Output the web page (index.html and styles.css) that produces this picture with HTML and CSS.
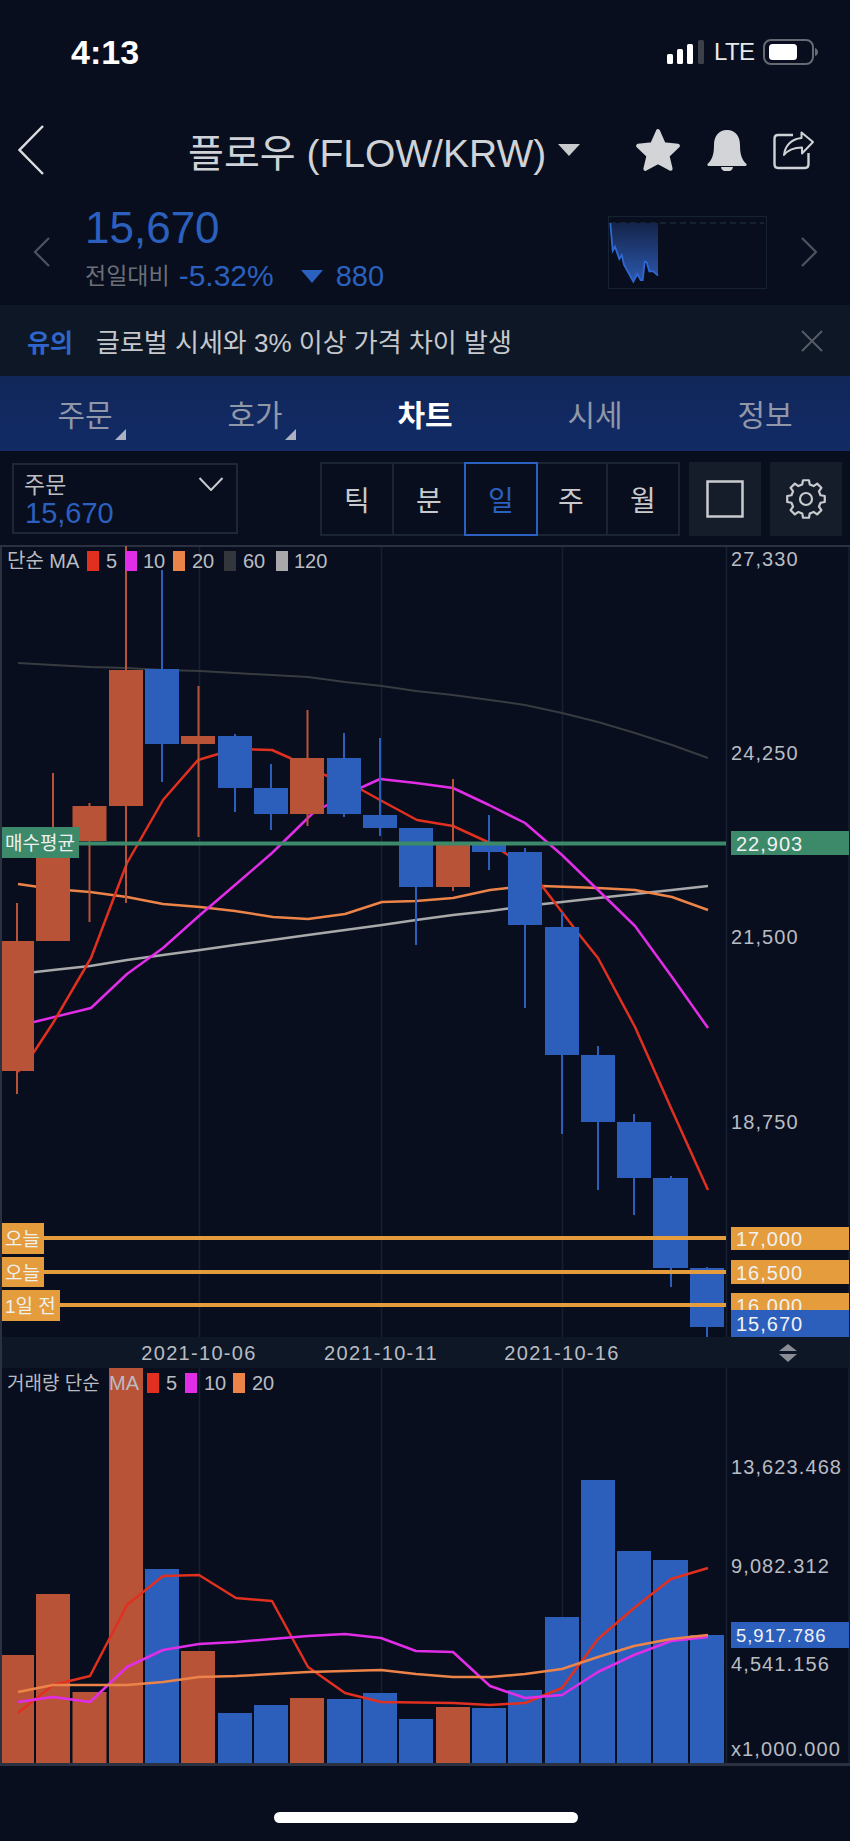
FILE: index.html
```html
<!DOCTYPE html>
<html lang="ko">
<head>
  <meta charset="utf-8">
  <title>플로우 (FLOW/KRW) 차트</title>
  <meta name="viewport" content="width=device-width, initial-scale=1">
  <link rel="stylesheet" href="styles.css">
</head>
<body>
  <div class="page">

    <!-- Status bar -->
    <div class="status">
      <span class="time">4:13</span>
      <div class="status-right">
        <svg class="signal" width="38" height="24" viewBox="0 0 38 24">
          <rect x="0" y="14" width="6" height="10" rx="1.5" fill="#fff"/>
          <rect x="10" y="9" width="6" height="15" rx="1.5" fill="#fff"/>
          <rect x="20" y="4" width="6" height="20" rx="1.5" fill="#fff"/>
          <rect x="31" y="0" width="6" height="24" rx="1.5" fill="#3c4048"/>
        </svg>
        <span class="lte">LTE</span>
        <svg class="battery" width="55" height="26" viewBox="0 0 55 26">
          <rect x="1" y="1" width="49" height="24" rx="7" fill="none" stroke="#666b73" stroke-width="2"/>
          <rect x="6" y="5" width="28" height="16" rx="3.5" fill="#fff"/>
          <path d="M52 9 Q55 10 55 13 Q55 16 52 17 Z" fill="#666b73"/>
        </svg>
      </div>
    </div>

    <!-- Title -->
    <div class="nav">
      <svg class="back" width="26" height="50" viewBox="0 0 26 50">
        <path d="M25 1 L1.5 25 L25 49" fill="none" stroke="#dcdde0" stroke-width="2.5"/>
      </svg>
      <h1 class="title">플로우 (FLOW/KRW)</h1>
      <span class="title-caret"></span>
      <div class="nav-icons">
        <svg class="star" width="48" height="44" viewBox="0 0 46 42">
          <path d="M23 3 L28.5 15.5 L42 17 L32 26.5 L35 39 L23 32.5 L11 39 L14 26.5 L4 17 L17.5 15.5 Z" fill="#d2d4d8" stroke="#d2d4d8" stroke-width="4" stroke-linejoin="round"/>
        </svg>
        <svg width="40" height="41" viewBox="0 0 40 41">
          <path d="M20 0 C11 0 7 7 7 15 C7 25 5 30 .5 34 Q0 36 2 36 H38 Q40 36 39.5 34 C35 30 33 25 33 15 C33 7 29 0 20 0 Z M14 37 A6 4.5 0 0 0 26 37 Z" fill="#d2d4d8"/>
        </svg>
        <svg width="42" height="39" viewBox="0 0 42 39">
          <path d="M20 4 H5 Q1.5 4 1.5 7.5 V33 Q1.5 37 5 37 H32 Q35.5 37 35.5 33 V22" fill="none" stroke="#cfd2d6" stroke-width="2.4"/>
          <path d="M40 11 L28.5 1.5 V7 C18 8 12 15 11 24 C15 19 21 16.5 29 16.5 V22.5 Z" fill="none" stroke="#cfd2d6" stroke-width="2" stroke-linejoin="round"/>
        </svg>
      </div>
    </div>

    <!-- Quote -->
    <div class="quote">
      <svg class="chev" width="18" height="30" viewBox="0 0 18 30">
        <path d="M16 1 L2 15 L16 29" fill="none" stroke="#4d535e" stroke-width="2.2"/>
      </svg>
      <div class="quote-main">
        <div class="price">15,670</div>
        <div class="change">
          <span class="change-label">전일대비</span>
          <span class="change-pct">-5.32%</span>
          <span class="down-caret"></span>
          <span class="change-abs">880</span>
        </div>
      </div>
      <svg class="mini" width="159" height="73" viewBox="608 217 159 73">
        <defs>
          <linearGradient id="miniFill" x1="0" y1="0" x2="0" y2="1">
            <stop offset="0" stop-color="#14244a"/>
            <stop offset="1" stop-color="#2c58ae"/>
          </linearGradient>
        </defs>
        <rect x="608.5" y="217.5" width="158" height="72" fill="none" stroke="#172231"/>
        <path d="M610 224 H764" stroke="#1d2735" stroke-width="1.5" stroke-dasharray="6 4"/>
        <path d="M610.3 224 L612.7 251.7 L615 247.7 L619.3 260 L621.7 256 L624 265.7 L633.3 282.7 L637.3 275 L640.7 281 L642.7 281 L644.7 262.7 L646.7 263.3 L649.3 272.3 L653.3 272.3 L658 276.7 V224 Z" fill="url(#miniFill)"/>
        <path d="M610.3 224 L612.7 251.7 L615 247.7 L619.3 260 L621.7 256 L624 265.7 L633.3 282.7 L637.3 275 L640.7 281 L642.7 281 L644.7 262.7 L646.7 263.3 L649.3 272.3 L653.3 272.3 L658 276.7" fill="none" stroke="#2f68d4" stroke-width="1.8"/>
      </svg>
      <svg class="chev chev-right" width="18" height="30" viewBox="0 0 18 30">
        <path d="M2 1 L16 15 L2 29" fill="none" stroke="#4d535e" stroke-width="2.2"/>
      </svg>
    </div>

    <!-- Notice -->
    <div class="notice">
      <strong class="notice-tag">유의</strong>
      <span class="notice-text">글로벌 시세와 3% 이상 가격 차이 발생</span>
      <svg class="notice-close" width="22" height="22" viewBox="0 0 22 22">
        <path d="M1 1 L21 21 M21 1 L1 21" stroke="#565c66" stroke-width="2"/>
      </svg>
    </div>

    <!-- Tabs -->
    <div class="tabs">
      <div class="tab has-corner">주문</div>
      <div class="tab has-corner">호가</div>
      <div class="tab active">차트</div>
      <div class="tab">시세</div>
      <div class="tab">정보</div>
    </div>

    <!-- Toolbar -->
    <div class="toolbar">
      <div class="order-box">
        <div>
          <div class="order-label">주문</div>
          <div class="order-price">15,670</div>
        </div>
        <svg class="order-chev" width="26" height="14" viewBox="0 0 26 14">
          <path d="M1.5 1 L13 13 L24.5 1" fill="none" stroke="#c8cace" stroke-width="2"/>
        </svg>
      </div>
      <div class="seg">
        <div class="seg-cell">틱</div>
        <div class="seg-cell">분</div>
        <div class="seg-cell on">일</div>
        <div class="seg-cell">주</div>
        <div class="seg-cell">월</div>
      </div>
      <div class="tool-btn">
        <svg width="38" height="38" viewBox="0 0 38 38">
          <rect x="1.5" y="1.5" width="35" height="35" fill="none" stroke="#c9cbcf" stroke-width="2.5"/>
        </svg>
      </div>
      <div class="tool-btn">
        <svg width="42" height="42" viewBox="-21 -21 42 42">
          <polygon points="-3.76,-14.52 -2.97,-18.77 2.97,-18.77 3.76,-14.52 7.61,-12.93 11.17,-15.37 15.37,-11.17 12.93,-7.61 14.52,-3.76 18.77,-2.97 18.77,2.97 14.52,3.76 12.93,7.61 15.37,11.17 11.17,15.37 7.61,12.93 3.76,14.52 2.97,18.77 -2.97,18.77 -3.76,14.52 -7.61,12.93 -11.17,15.37 -15.37,11.17 -12.93,7.61 -14.52,3.76 -18.77,2.97 -18.77,-2.97 -14.52,-3.76 -12.93,-7.61 -15.37,-11.17 -11.17,-15.37 -7.61,-12.93" fill="none" stroke="#c9cbcf" stroke-width="2.2" stroke-linejoin="round"/>
          <circle r="6" fill="none" stroke="#c9cbcf" stroke-width="2.2"/>
        </svg>
      </div>
    </div>

    <!-- Chart: viewBox uses page coordinates -->
    <svg class="chart" width="850" height="1222" viewBox="0 545 850 1222">
      <!-- frame and grid -->
      <g class="grid">
        <path d="M199.5 547 V1337 M199.5 1368 V1763 M381.5 547 V1337 M381.5 1368 V1763 M562.5 547 V1337 M562.5 1368 V1763 M726.5 547 V1337 M726.5 1368 V1763 M849 547 V1763"/>
      </g>
      <rect class="frame" x="0" y="545" width="850" height="2"/>
      <rect class="frame" x="0" y="545" width="2" height="1221"/>
      <rect class="frame" x="0" y="1763" width="850" height="3"/>
      <rect class="strip" x="2" y="1337" width="847" height="31"/>

      <!-- price moving averages -->
      <polyline class="ma60" points="18,663 53,665 90,667 127,668 163,670 200,671 235,673 272,675 308,677 345,682 382,686 416,691 453,695 490,700 525,705 562,713 598,722 635,733 672,745 708,758"/>
      <polyline class="ma120" points="18,974 53,970 90,966 127,960 163,955 200,950 235,945 272,940 308,935 345,930 382,925 416,920 453,915 490,911 525,906 562,902 598,898 635,894 672,890 708,886"/>
      <polyline class="ma20" points="18,884 53,889 90,892 127,897 163,904 200,907 235,911 273,917 308,919 345,914 382,902 416,901 453,898 490,890 508,888 542,886 598,888 635,890 672,897 708,910"/>
      <polyline class="ma10" points="18,1025 34,1022 91,1008 127,974 163,948 200,915 235,885 272,853 313,813 345,795 380,779 416,783 453,788 489,805 525,823 562,855 598,890 635,926 672,977 708,1028"/>
      <polyline class="ma5" points="18,1072 34,1052 53,1023 91,958 127,863 163,800 198,760 235,749 272,750 290,758 325,775 362,790 380,800 417,820 453,826 490,843 508,855 542,886 578,933 598,958 635,1027 671,1108 708,1190"/>

      <!-- candles -->
      <g class="up">
        <rect x="16" y="903" width="2" height="191"/><rect x="2" y="941" width="32" height="130"/>
        <rect x="52" y="773" width="2" height="168"/><rect x="36" y="845" width="34" height="96"/>
        <rect x="88.5" y="803" width="2" height="119"/><rect x="72.5" y="806" width="34" height="35"/>
        <rect x="125" y="546" width="2" height="357"/><rect x="109" y="670" width="34" height="136"/>
        <rect x="197.5" y="686" width="2" height="151"/><rect x="181" y="736" width="34" height="8"/>
        <rect x="306.5" y="710" width="2" height="116"/><rect x="290" y="758" width="34" height="56"/>
        <rect x="452" y="779" width="2" height="112"/><rect x="436" y="844" width="34" height="43"/>
      </g>
      <g class="down">
        <rect x="161" y="570" width="2" height="212"/><rect x="145" y="669" width="34" height="75"/>
        <rect x="234" y="734" width="2" height="78"/><rect x="218" y="736" width="34" height="52"/>
        <rect x="270" y="764" width="2" height="66"/><rect x="254" y="788" width="34" height="26"/>
        <rect x="343" y="733" width="2" height="84"/><rect x="327" y="758" width="34" height="56"/>
        <rect x="379" y="738" width="2" height="98"/><rect x="363" y="815" width="34" height="13"/>
        <rect x="415" y="828" width="2" height="117"/><rect x="399" y="828" width="34" height="59"/>
        <rect x="488" y="815" width="2" height="55"/><rect x="472" y="843" width="34" height="9"/>
        <rect x="524" y="848" width="2" height="160"/><rect x="508" y="852" width="34" height="73"/>
        <rect x="561" y="912" width="2" height="222"/><rect x="545" y="927" width="34" height="128"/>
        <rect x="597" y="1046" width="2" height="144"/><rect x="581" y="1055" width="34" height="67"/>
        <rect x="633" y="1114" width="2" height="101"/><rect x="617" y="1122" width="34" height="56"/>
        <rect x="670" y="1176" width="2" height="111"/><rect x="653" y="1178" width="35" height="90"/>
        <rect x="706" y="1267" width="2" height="70"/><rect x="690" y="1268" width="34" height="59"/>
      </g>

      <!-- price lines -->
      <rect class="green" x="79" y="841.5" width="647" height="4"/>
      <rect class="gold" x="44" y="1236" width="682" height="4"/>
      <rect class="gold" x="44" y="1270" width="682" height="4"/>
      <rect class="gold" x="60" y="1303" width="666" height="4"/>

      <!-- line tags -->
      <rect class="green" x="2" y="827" width="77" height="31"/>
      <text class="tag" x="5" y="850">매수평균</text>
      <rect class="gold" x="2" y="1223" width="42" height="31"/>
      <text class="tag" x="5" y="1246">오늘</text>
      <rect class="gold" x="2" y="1257" width="42" height="30"/>
      <text class="tag" x="5" y="1280">오늘</text>
      <rect class="gold" x="2" y="1290" width="58" height="31"/>
      <text class="tag" x="5" y="1313">1일 전</text>

      <!-- legends -->
      <text class="legend" x="7" y="568">단순 MA</text>
      <rect class="sw-red" x="87" y="551" width="12" height="20"/>
      <text class="legend" x="106" y="568">5</text>
      <rect class="sw-mag" x="125" y="551" width="12" height="20"/>
      <text class="legend" x="143" y="568">10</text>
      <rect class="sw-org" x="173" y="551" width="12" height="20"/>
      <text class="legend" x="192" y="568">20</text>
      <rect class="sw-dark" x="224" y="551" width="12" height="20"/>
      <text class="legend" x="243" y="568">60</text>
      <rect class="sw-grey" x="276" y="551" width="12" height="20"/>
      <text class="legend" x="294" y="568">120</text>

      <!-- price axis -->
      <text class="axis" x="731" y="566">27,330</text>
      <text class="axis" x="731" y="760">24,250</text>
      <text class="axis" x="731" y="944">21,500</text>
      <text class="axis" x="731" y="1129">18,750</text>
      <rect class="green" x="731" y="831" width="118" height="24"/>
      <text class="axis-on" x="736" y="851">22,903</text>
      <rect class="gold" x="731" y="1227" width="118" height="23"/>
      <text class="axis-on" x="736" y="1246">17,000</text>
      <rect class="gold" x="731" y="1260" width="118" height="24"/>
      <text class="axis-on" x="736" y="1280">16,500</text>
      <rect class="gold" x="731" y="1293" width="118" height="20"/>
      <text class="axis-on" x="736" y="1313">16,000</text>
      <rect class="blue" x="731" y="1310" width="118" height="27"/>
      <text class="axis-on" x="736" y="1331">15,670</text>

      <!-- date axis -->
      <text class="date" x="199" y="1360">2021-10-06</text>
      <text class="date" x="381" y="1360">2021-10-11</text>
      <text class="date" x="562" y="1360">2021-10-16</text>
      <path d="M788 1344 L797 1351 H779 Z M779 1354 H797 L788 1362 Z" fill="#8a8d93"/>

      <!-- volume bars -->
      <g class="up">
        <rect x="2" y="1655" width="32" height="108"/>
        <rect x="36" y="1594" width="34" height="169"/>
        <rect x="72.5" y="1692" width="34" height="71"/>
        <rect x="109" y="1368" width="34" height="395"/>
        <rect x="181" y="1651" width="34" height="112"/>
        <rect x="290" y="1698" width="34" height="65"/>
        <rect x="436" y="1707" width="34" height="56"/>
      </g>
      <g class="down">
        <rect x="145" y="1569" width="34" height="194"/>
        <rect x="218" y="1713" width="34" height="50"/>
        <rect x="254" y="1705" width="34" height="58"/>
        <rect x="327" y="1699" width="34" height="64"/>
        <rect x="363" y="1693" width="34" height="70"/>
        <rect x="399" y="1719" width="34" height="44"/>
        <rect x="472" y="1708" width="34" height="55"/>
        <rect x="508" y="1690" width="34" height="73"/>
        <rect x="545" y="1617" width="34" height="146"/>
        <rect x="581" y="1480" width="34" height="283"/>
        <rect x="617" y="1551" width="34" height="212"/>
        <rect x="653" y="1560" width="35" height="203"/>
        <rect x="690" y="1635" width="34" height="128"/>
      </g>

      <!-- volume moving averages -->
      <polyline class="ma5" points="18,1713 53,1685 90,1676 127,1605 163,1576 199,1575 236,1598 272,1601 308,1667 345,1693 381,1702 416,1702.5 453,1703 490,1705 525,1703 562,1688 598,1639 634,1608 671,1579 708,1568"/>
      <polyline class="ma10" points="18,1702 53,1697 90,1702 127,1667 163,1650 199,1644 236,1642 272,1639 308,1636 345,1634 381,1638 416,1651 453,1652 490,1686 525,1698 562,1695 598,1672 634,1655 671,1641 708,1637"/>
      <polyline class="ma20" points="18,1692 53,1685 90,1685 127,1685 163,1682 199,1677 236,1676 272,1674 308,1672 345,1671 381,1670 416,1674 453,1677 490,1677 525,1674 562,1669 598,1657 634,1646 671,1639 708,1635"/>

      <!-- volume legend -->
      <text class="legend-vol" x="7" y="1390">거래량 단순</text>
      <text class="legend" x="109" y="1390">MA</text>
      <rect class="sw-red" x="147" y="1373" width="12" height="20"/>
      <text class="legend" x="166" y="1390">5</text>
      <rect class="sw-mag" x="185" y="1373" width="12" height="20"/>
      <text class="legend" x="204" y="1390">10</text>
      <rect class="sw-org" x="233" y="1373" width="12" height="20"/>
      <text class="legend" x="252" y="1390">20</text>

      <!-- volume axis -->
      <text class="axis" x="731" y="1474">13,623.468</text>
      <text class="axis" x="731" y="1573">9,082.312</text>
      <rect class="blue" x="731" y="1622" width="118" height="26"/>
      <text class="axis-small" x="736" y="1642">5,917.786</text>
      <text class="axis" x="731" y="1671">4,541.156</text>
      <text class="axis" x="731" y="1756">x1,000.000</text>
    </svg>

    <div class="home-bar"></div>
  </div>
</body>
</html>
```
FILE: styles.css
```css
* { box-sizing: border-box; }
html, body { margin: 0; padding: 0; }
body { background: #080e1d; font-family: "Liberation Sans", "Noto Sans CJK KR", sans-serif; color: #c8cace; }
.page { width: 850px; height: 1841px; overflow: hidden; display: flex; flex-direction: column; }

.status { height: 104px; flex: none; display: flex; align-items: center; justify-content: space-between; padding: 0 32px 0 71px; }
.time { font-size: 34px; font-weight: bold; color: #fff; }
.status-right { display: flex; align-items: center; }
.lte { font-size: 24px; color: #e8e9eb; margin: 0 9px; width: 40px; letter-spacing: -.6px; }

.nav { height: 92px; flex: none; display: flex; align-items: center; padding: 0 35px 0 18px; }
.back { margin-right: 144px; }
.title { margin: 0; font-size: 39px; font-weight: normal; color: #cfd2d6; white-space: nowrap; }
.title-caret { width: 0; height: 0; margin-left: 12px; border-left: 11px solid transparent; border-right: 11px solid transparent; border-top: 12px solid #c8cace; }
.nav-icons { margin-left: auto; display: flex; align-items: center; gap: 26px; }
.star { margin-right: -1px; }

.quote { height: 109px; flex: none; display: flex; align-items: center; padding: 3px 32px 0 33px; }
.quote-main { margin-left: 34px; margin-top: -9px; }
.price { font-size: 44px; line-height: 50px; color: #2b60bf; }
.change { margin-top: 6px; display: flex; align-items: center; line-height: 34px; }
.change-label { font-size: 23px; color: #6b7078; }
.change-pct { font-size: 30px; color: #2b60bf; margin-left: 9px; }
.down-caret { width: 0; height: 0; margin: 2px 0 0 27px; border-left: 11px solid transparent; border-right: 11px solid transparent; border-top: 13px solid #2b60bf; }
.change-abs { font-size: 29px; color: #2b60bf; margin-left: 13px; }
.mini { margin-left: auto; }
.chev-right { margin-left: 33px; }

.notice { height: 71px; flex: none; display: flex; align-items: center; padding: 0 27px; background: #0e1726; }
.notice-tag { font-size: 25px; color: #2e66cc; }
.notice-text { font-size: 26px; color: #c5c8cc; margin-left: 23px; white-space: nowrap; }
.notice-close { margin-left: auto; }

.tabs { height: 75px; flex: none; display: grid; grid-template-columns: repeat(5, 170px); background: linear-gradient(#11275a, #122b66); }
.tab { position: relative; display: flex; align-items: center; justify-content: center; font-size: 30px; color: #9097a8; padding-bottom: 2px; }
.tab.active { color: #fff; font-weight: bold; }
.tab.has-corner::after { content: ""; position: absolute; right: 44px; bottom: 11px; width: 11px; height: 11px; background: #a9b1c2; clip-path: polygon(100% 0, 100% 100%, 0 100%); }

.toolbar { height: 94px; flex: none; display: flex; align-items: flex-start; padding-top: 11px; }
.order-box { width: 226px; height: 71px; margin: 1px 0 0 12px; padding: 7px 12px 0 11px; border: 2px solid #1e2735; display: flex; justify-content: space-between; align-items: flex-start; }
.order-label { font-size: 23px; line-height: 27px; color: #bcbec2; margin-left: -1px; }
.order-price { font-size: 29px; line-height: 29px; color: #2b60bf; }
.order-chev { margin-top: 5px; }
.seg { width: 360px; height: 74px; margin-left: 82px; display: flex; border: 2px solid #1b2432; }
.seg-cell { flex: 1; display: flex; align-items: center; justify-content: center; font-size: 28px; color: #c8cace; border-right: 2px solid #1b2432; }
.seg-cell:last-child { border-right: 0; }
.seg-cell.on { color: #2b60c0; outline: 2px solid #2b60c0; outline-offset: 0; border-right: 0; position: relative; }
.tool-btn { width: 72px; height: 74px; margin-left: 9px; background: #151d2b; display: flex; align-items: center; justify-content: center; }

.chart { display: block; flex: none; }
.chart text { font-family: "Liberation Sans", "Noto Sans CJK KR", sans-serif; }
.chart polyline { fill: none; stroke-linejoin: round; }
.grid path { fill: none; stroke: #152030; stroke-width: 1.5; }
.frame { fill: #2a3242; }
.strip { fill: #0e1726; }
.up rect { fill: #b85338; }
.down rect { fill: #2c5fbc; }
.green { fill: #3d8a6b; }
.gold { fill: #e49c3d; }
.blue { fill: #2c5fbc; }

.ma5 { stroke: #e1301f; stroke-width: 2.5; }
.ma10 { stroke: #e22de8; stroke-width: 2.5; }
.ma20 { stroke: #ec8449; stroke-width: 2.5; }
.ma60 { stroke: #383b40; stroke-width: 2; }
.ma120 { stroke: #a9a9ab; stroke-width: 2.5; }

.sw-red { fill: #e1301f; }
.sw-mag { fill: #e22de8; }
.sw-org { fill: #ec8449; }
.sw-dark { fill: #33363b; }
.sw-grey { fill: #a9a9ab; }

.tag { font-size: 19px; fill: #eef0ee; }
.legend { font-size: 20px; fill: #b9bcc2; }
.legend-vol { font-size: 19px; fill: #b9bcc2; }
.axis { font-size: 20px; letter-spacing: 1.1px; fill: #b9bcc2; }
.axis-on { font-size: 20px; letter-spacing: 1px; fill: #f0f1f3; }
.axis-small { font-size: 18.5px; letter-spacing: .9px; fill: #f0f1f3; }
.date { font-size: 20px; letter-spacing: 1.3px; fill: #b9bcc2; text-anchor: middle; }

.home-bar { width: 304px; height: 11px; margin: 45px 0 0 274px; background: #fff; border-radius: 6px; flex: none; }
```
